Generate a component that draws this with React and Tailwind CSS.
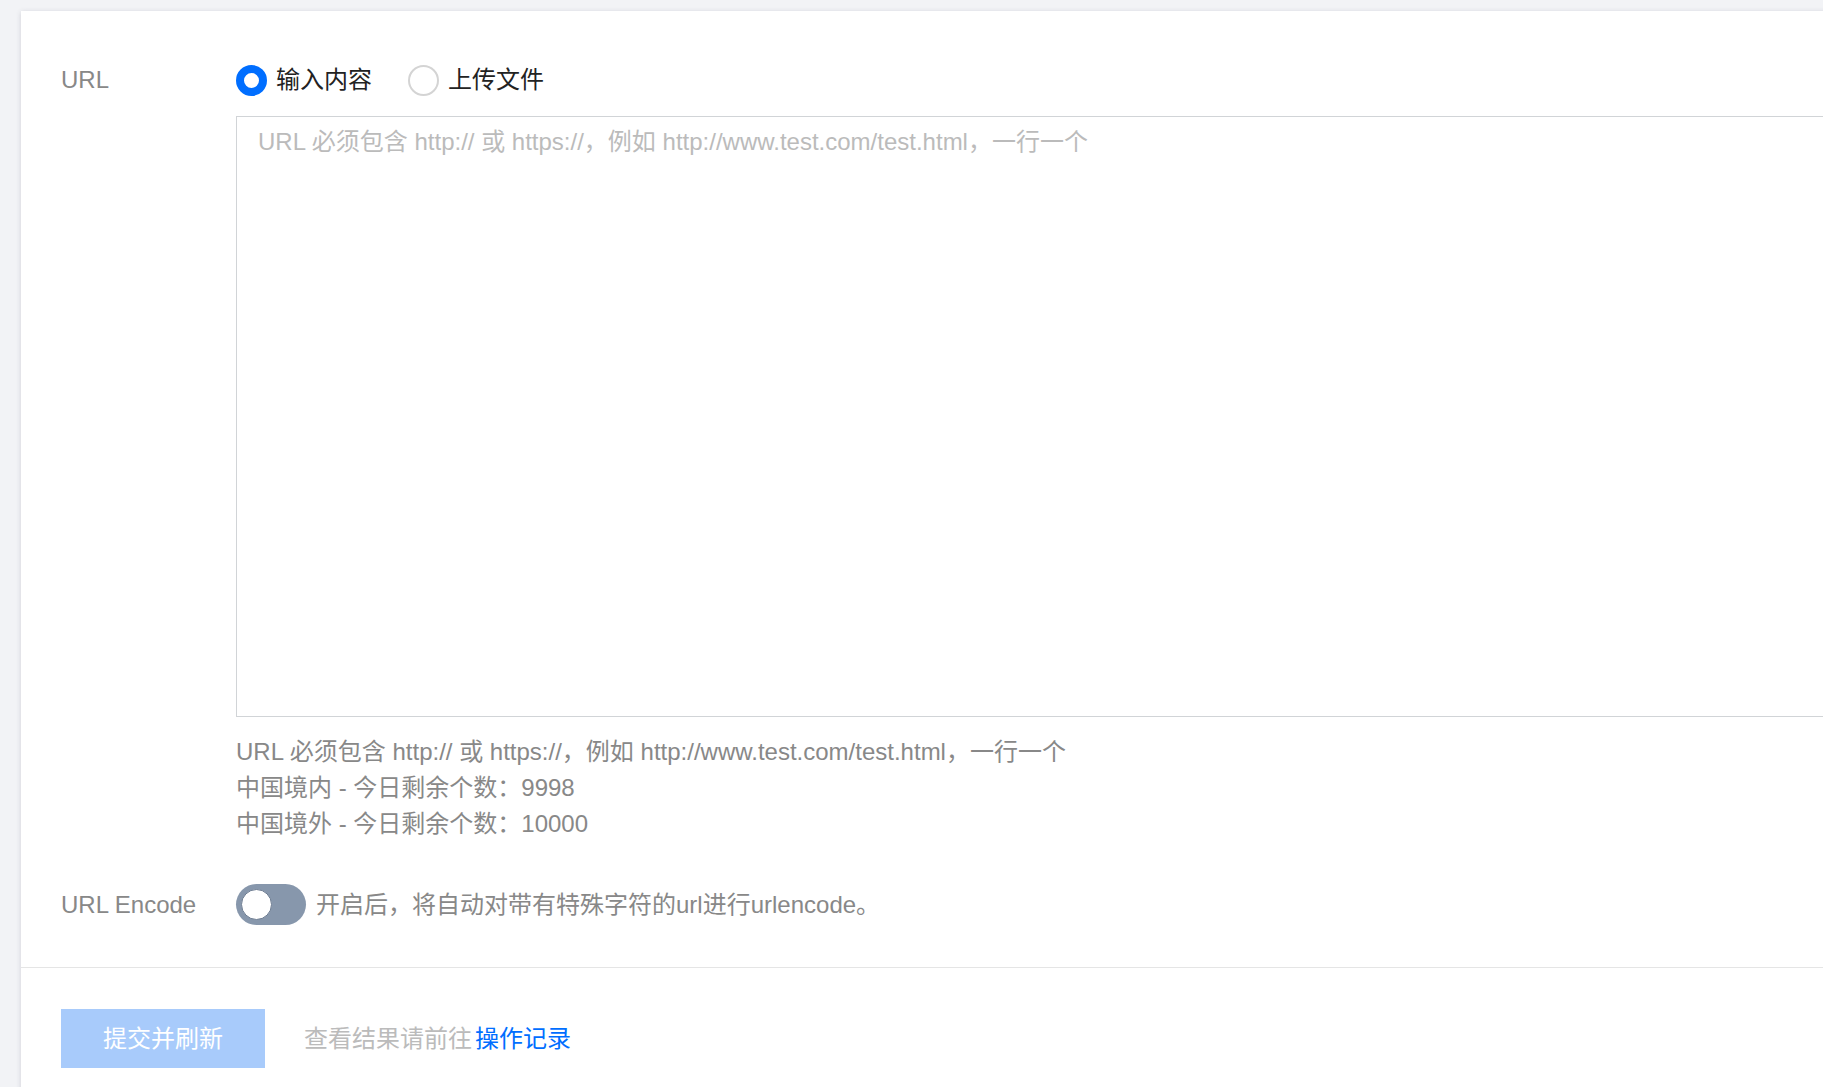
import { useState } from "react"

const font = { fontFamily: '"Liberation Sans", Arial, "Noto Sans CJK SC", sans-serif' }

function Radio({ checked, label, onClick }) {
  return (
    <label className="flex items-center gap-[9px] cursor-pointer" onClick={onClick}>
      {checked ? (
        <span className="block w-[31px] h-[31px] rounded-full border-[8px] border-[#006eff] bg-white" />
      ) : (
        <span className="block w-[31px] h-[31px] rounded-full border-2 border-[#d4d4d4] bg-white" />
      )}
      <span className="text-[24px] text-[#222]">{label}</span>
    </label>
  )
}

export default function App() {
  const [mode, setMode] = useState("input")
  const [encode, setEncode] = useState(false)

  return (
    <div className="h-screen overflow-hidden bg-[#f2f3f6] pl-[21px] pt-[11px]" style={font}>
      <div className="w-[1900px] h-[1200px] bg-white shadow-[0_1px_5px_rgba(54,58,80,0.18)]">
        {/* URL field */}
        <div className="flex pl-10 pt-[49px]">
          <div className="w-[175px] shrink-0 h-[40px] flex items-center text-[24px] text-[#888]">URL</div>
          <div className="flex-1">
            <div className="h-[40px] flex items-center gap-[36px]">
              <Radio checked={mode === "input"} label="输入内容" onClick={() => setMode("input")} />
              <Radio checked={mode === "file"} label="上传文件" onClick={() => setMode("file")} />
            </div>
            <textarea
              className="mt-[16px] block w-full h-[601px] border border-[#d1d4d7] px-[21px] py-[7px] text-[24px] leading-[36px] text-[#333] placeholder:text-[#bbb] outline-none resize-none"
              style={font}
              placeholder="URL 必须包含 http:// 或 https://，例如 http://www.test.com/test.html，一行一个"
            />
            <div className="mt-[17px] text-[24px] leading-[36px] text-[#888]">
              <div>URL 必须包含 http:// 或 https://，例如 http://www.test.com/test.html，一行一个</div>
              <div>中国境内 - 今日剩余个数：9998</div>
              <div>中国境外 - 今日剩余个数：10000</div>
            </div>
          </div>
        </div>

        {/* URL Encode */}
        <div className="flex pl-10 mt-[42px]">
          <div className="w-[175px] shrink-0 h-[41px] flex items-center text-[24px] text-[#888]">URL Encode</div>
          <div className="flex items-center gap-[10px]">
            <button
              onClick={() => setEncode(!encode)}
              className="w-[70px] h-[41px] rounded-full bg-[#8797ac] p-[5px] flex items-center"
            >
              <span className="block w-[31px] h-[31px] rounded-full bg-white border border-[#6f7e93]" />
            </button>
            <span className="text-[24px] text-[#888]">开启后，将自动对带有特殊字符的url进行urlencode。</span>
          </div>
        </div>

        <div className="mt-[42px] border-t border-[#e5e5e5]" />

        {/* Footer */}
        <div className="flex items-center pl-10 pt-[41px]">
          <button className="w-[204px] h-[59px] bg-[#a8cbfb] text-white text-[24px]">提交并刷新</button>
          <span className="ml-[39px] text-[24px] text-[#bbb]">
            查看结果请前往<a className="text-[#006eff] ml-[3px]">操作记录</a>
          </span>
        </div>
      </div>
    </div>
  )
}
